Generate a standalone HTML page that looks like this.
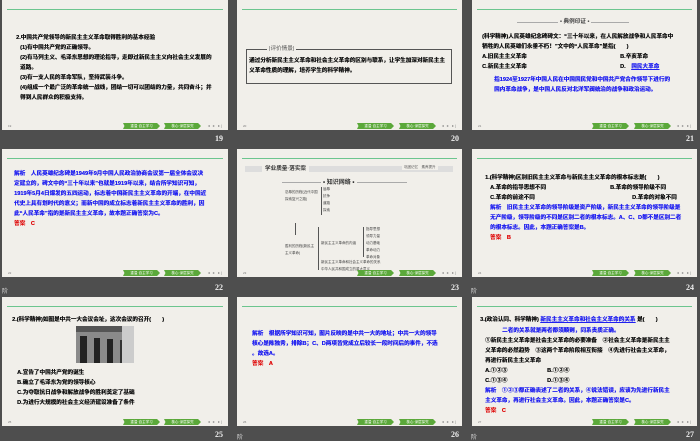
<!DOCTYPE html>
<html><head><meta charset="utf-8">
<style>
*{margin:0;padding:0;box-sizing:border-box}
body{width:700px;height:438px;background:#4e4e4e;position:relative;overflow:hidden;font-family:"Liberation Sans","Noto Sans CJK SC",sans-serif}
.s{position:absolute;background:#f1efea;overflow:hidden}
.s .gl{position:absolute;left:5px;right:5px;top:9px;height:1px;background:#6cc58e}
.s .ft{position:absolute;bottom:2px;left:6px;font-size:3px;color:#777}
.b{position:absolute;bottom:1px;height:6px;background:#5ba83a;color:#fff;font-size:3.5px;line-height:6px;text-align:center;clip-path:polygon(0 0,92% 0,100% 50%,92% 100%,0 100%,4% 50%)}
.nav{position:absolute;bottom:2px;right:5px;font-size:4px;color:#888;letter-spacing:1px}
.n{position:absolute;color:#eee;font-size:8px;font-weight:bold;font-family:"Liberation Serif",serif}
.j{position:absolute;color:#ddd;font-size:6px;font-family:"Noto Sans CJK SC",sans-serif}
.t{position:absolute;font-size:5.6px;line-height:10px;font-weight:bold;color:#111;white-space:nowrap;text-shadow:0.25px 0 0 currentColor}
.bl{color:#2020f0}.rd{color:#e01010}.ul{text-decoration:underline}
</style></head><body>

<!-- row 1 -->
<div class="s" style="left:2px;top:0;width:226px;height:130px">
<div class="gl"></div>
<div class="t" style="left:14px;top:33px">2.中国共产党领导的新民主主义革命取得胜利的基本经验</div>
<div class="t" style="left:18px;top:43px">(1)有中国共产党的正确领导。</div>
<div class="t" style="left:18px;top:53px">(2)有马列主义、毛泽东思想的理论指导，走即过新民主主义向社会主义发展的</div>
<div class="t" style="left:18px;top:63px">道路。</div>
<div class="t" style="left:18px;top:73px">(3)有一支人民的革命军队，坚持武装斗争。</div>
<div class="t" style="left:18px;top:83px">(4)组成一个最广泛的革命统一战线，团结一切可以团结的力量，共同奋斗；并</div>
<div class="t" style="left:18px;top:93px">得到人民群众的积极支持。</div>
<div class="ft">19</div><div class="b" style="left:121px;width:37px">重温·自主学习</div><div class="b" style="left:162px;width:37px">核心·深层探究</div><div class="nav">◂ ▸ ▸|</div>
</div>
<div class="n" style="left:215px;top:134px">19</div>

<div class="s" style="left:237px;top:0;width:225px;height:130px">
<div class="gl"></div>
<div style="position:absolute;left:9px;top:49px;width:206px;height:35px;border:1px solid #555"></div>
<div style="position:absolute;left:30px;top:44px;background:#f1efea;font-size:5.6px;color:#555;padding:0 2px">|评价情景|</div>
<div class="t" style="left:12px;top:56px">通过分析新民主主义革命和社会主义革命的区别与联系，让学生加深对新民主主</div>
<div class="t" style="left:12px;top:66px">义革命性质的理解，培养学生的科学精神。</div>
<div class="ft">20</div><div class="b" style="left:120px;width:37px">重温·自主学习</div><div class="b" style="left:162px;width:37px">核心·深层探究</div><div class="nav">◂ ▸ ▸|</div>
</div>
<div class="n" style="left:451px;top:134px">20</div>

<div class="s" style="left:472px;top:0;width:225px;height:130px">
<div class="gl"></div>
<div style="position:absolute;left:45px;top:22px;width:112px;height:1px;background:#aaa"></div>
<div style="position:absolute;left:86px;top:17px;background:#f1efea;font-size:5.6px;font-weight:bold;color:#444;padding:0 2px">• 典例印证 •</div>
<div class="t" style="left:10px;top:32px">(科学精神)人民英雄纪念碑碑文：“三十年以来，在人民解放战争和人民革命中</div>
<div class="t" style="left:10px;top:42px">牺牲的人民英雄们永垂不朽！”文中的“人民革命”是指(　　)</div>
<div class="t" style="left:10px;top:52px">A.旧民主主义革命</div><div class="t" style="left:148px;top:52px">B.辛亥革命</div>
<div class="t" style="left:10px;top:62px">C.新民主主义革命</div><div class="t" style="left:148px;top:62px">D.　<span class="bl ul">国民大革命</span></div>
<div class="t bl" style="left:22px;top:75px">指1924至1927年中国人民在中国国民党和中国共产党合作领导下进行的</div>
<div class="t bl" style="left:22px;top:85px">国内革命战争，是中国人民反对北洋军阀统治的战争和政治运动。</div>
<div class="ft">21</div><div class="b" style="left:120px;width:37px">重温·自主学习</div><div class="b" style="left:162px;width:37px">核心·深层探究</div><div class="nav">◂ ▸ ▸|</div>
</div>
<div class="n" style="left:686px;top:134px">21</div>

<!-- row 2 -->
<div class="s" style="left:2px;top:149px;width:226px;height:128px">
<div class="gl"></div>
<div class="t bl" style="left:12px;top:20px">解析　人民英雄纪念碑是1949年9月中国人民政治协商会议第一届全体会议决</div>
<div class="t bl" style="left:12px;top:30px">定建立的，碑文中的“三十年以来”也就是1919年以来，结合所学知识可知，</div>
<div class="t bl" style="left:12px;top:40px">1919年5月4日爆发的五四运动，标志着中国新民主主义革命的开端，在中国近</div>
<div class="t bl" style="left:12px;top:50px">代史上具有划时代的意义；而新中国的成立标志着新民主主义革命的胜利，因</div>
<div class="t bl" style="left:12px;top:60px">此“人民革命”指的是新民主主义革命，故本题正确答案为C。</div>
<div class="t rd" style="left:12px;top:70px">答案　C</div>
<div class="ft">22</div><div class="b" style="left:121px;width:37px">重温·自主学习</div><div class="b" style="left:162px;width:37px">核心·深层探究</div><div class="nav">◂ ▸ ▸|</div>
</div>
<div class="j" style="left:2px;top:286px">阶</div>
<div class="n" style="left:215px;top:283px">22</div>

<div class="s" style="left:237px;top:149px;width:225px;height:128px">
<div class="gl"></div>
<div style="position:absolute;left:8px;top:17px;width:208px;height:6px;background:#ddd"></div>
<div style="position:absolute;left:25px;top:15px;background:#f1efea;font-size:5.6px;font-weight:bold;color:#333;padding:0 3px">学业质量·落实案</div>
<div style="position:absolute;left:165px;top:16px;background:#f1efea;font-size:3.5px;color:#555;padding:0 2px">巩固记忆　素养提升</div>
<div style="position:absolute;left:45px;top:33px;width:125px;height:1px;background:#aaa"></div>
<div style="position:absolute;left:84px;top:28px;background:#f1efea;font-size:6px;font-weight:bold;color:#333;padding:0 2px">• 知识网络 •</div>
<div style="position:absolute;font-size:3.5px;color:#444;line-height:7px;left:48px;top:40px">忍辱的历程(近代中国<br>探索复兴之路)</div>
<div style="position:absolute;left:84px;top:38px;width:1px;height:28px;background:#555"></div>
<div style="position:absolute;font-size:3.5px;color:#444;line-height:7px;left:86px;top:37px">屈辱<br>抗争<br>道路<br>探索</div>
<div style="position:absolute;left:58px;top:74px;width:1px;height:12px;background:#555"></div>
<div style="position:absolute;font-size:3.5px;color:#444;line-height:7px;left:48px;top:94px">胜利的历程(新民主<br>主义革命)</div>
<div style="position:absolute;left:81px;top:78px;width:1px;height:43px;background:#555"></div>
<div style="position:absolute;font-size:3.5px;color:#444;left:84px;top:92px">新民主主义革命的内涵</div>
<div style="position:absolute;left:126px;top:78px;width:1px;height:30px;background:#555"></div>
<div style="position:absolute;font-size:3.5px;color:#444;line-height:7px;left:129px;top:77px">指导思想<br>领导力量<br>动力基础<br>革命动力<br>革命对象</div>
<div style="position:absolute;font-size:3.5px;color:#444;line-height:7px;left:84px;top:110px">新民主主义革命和社会主义革命的关系<br>中华人民共和国成立的重大意义</div>
<div class="ft">23</div><div class="b" style="left:120px;width:37px">重温·自主学习</div><div class="b" style="left:162px;width:37px">核心·深层探究</div><div class="nav">◂ ▸ ▸|</div>
</div>
<div class="n" style="left:451px;top:283px">23</div>

<div class="s" style="left:472px;top:149px;width:225px;height:128px">
<div class="gl"></div>
<div class="t" style="left:13px;top:24px">1.(科学精神)区别旧民主主义革命与新民主主义革命的根本标志是(　　)</div>
<div class="t" style="left:18px;top:34px">A.革命的指导思想不同</div><div class="t" style="left:138px;top:34px">B.革命的领导阶级不同</div>
<div class="t" style="left:18px;top:44px">C.革命的前途不同</div><div class="t" style="left:160px;top:44px">D.革命的对象不同</div>
<div class="t bl" style="left:18px;top:54px">解析　旧民主主义革命的领导阶级是资产阶级，新民主主义革命的领导阶级是</div>
<div class="t bl" style="left:18px;top:64px">无产阶级，领导阶级的不同是区别二者的根本标志。A、C、D都不是区别二者</div>
<div class="t bl" style="left:18px;top:74px">的根本标志。因此，本题正确答案是B。</div>
<div class="t rd" style="left:18px;top:84px">答案　B</div>
<div class="ft">24</div><div class="b" style="left:120px;width:37px">重温·自主学习</div><div class="b" style="left:162px;width:37px">核心·深层探究</div><div class="nav">◂ ▸ ▸|</div>
</div>
<div class="j" style="left:471px;top:286px">阶</div>
<div class="n" style="left:686px;top:283px">24</div>

<!-- row 3 -->
<div class="s" style="left:2px;top:297px;width:226px;height:129px">
<div class="gl"></div>
<div class="t" style="left:10px;top:18px">2.(科学精神)如图是中共一大会议会址，这次会议的召开(　　)</div>
<div style="position:absolute;left:74px;top:29px;width:58px;height:37px;background:#8a8a8a;overflow:hidden">
<div style="position:absolute;left:0;top:0;width:58px;height:6px;background:#555"></div>
<div style="position:absolute;left:4px;top:10px;width:7px;height:27px;background:#222"></div>
<div style="position:absolute;left:18px;top:12px;width:6px;height:25px;background:#222"></div>
<div style="position:absolute;left:31px;top:13px;width:6px;height:24px;background:#222"></div>
<div style="position:absolute;left:44px;top:14px;width:5px;height:23px;background:#333"></div>
<div style="position:absolute;right:0;top:0;width:12px;height:37px;background:#ccc"></div>
</div>
<div class="t" style="left:15px;top:71px">A.宣告了中国共产党的诞生</div>
<div class="t" style="left:15px;top:81px">B.确立了毛泽东为党的领导核心</div>
<div class="t" style="left:15px;top:91px">C.为夺取抗日战争和解放战争的胜利奠定了基础</div>
<div class="t" style="left:15px;top:101px">D.为进行大规模的社会主义经济建设准备了条件</div>
<div class="ft">25</div><div class="b" style="left:121px;width:37px">重温·自主学习</div><div class="b" style="left:162px;width:37px">核心·深层探究</div><div class="nav">◂ ▸ ▸|</div>
</div>
<div class="n" style="left:215px;top:430px">25</div>

<div class="s" style="left:237px;top:297px;width:225px;height:129px">
<div class="gl"></div>
<div class="t bl" style="left:15px;top:32px">解析　根据所学知识可知，图片反映的是中共一大的地址；中共一大的领导</div>
<div class="t bl" style="left:15px;top:42px">核心是陈独秀，排除B；C、D两项皆党成立后较长一段时间后的事件，不选</div>
<div class="t bl" style="left:15px;top:52px">。故选A。</div>
<div class="t rd" style="left:15px;top:62px">答案　A</div>
<div class="ft">26</div><div class="b" style="left:120px;width:37px">重温·自主学习</div><div class="b" style="left:162px;width:37px">核心·深层探究</div><div class="nav">◂ ▸ ▸|</div>
</div>
<div class="j" style="left:237px;top:432px">阶</div>
<div class="n" style="left:451px;top:430px">26</div>

<div class="s" style="left:472px;top:297px;width:225px;height:129px">
<div class="gl"></div>
<div class="t" style="left:8px;top:18px">3.(政治认同、科学精神) <span class="bl ul">新民主主义革命和社会主义革命的关系</span> 是(　　)</div>
<div class="t bl" style="left:30px;top:29px">二者的关系就是两者都须顺则，同系贵质正确。</div>
<div class="t" style="left:13px;top:39px">①新民主主义革命是社会主义革命的必要准备　②社会主义革命是新民主主</div>
<div class="t" style="left:13px;top:49px">义革命的必然趋势　③这两个革命阶段相互衔接　④先进行社会主义革命，</div>
<div class="t" style="left:13px;top:59px">再进行新民主主义革命</div>
<div class="t" style="left:13px;top:69px">A.①②③</div><div class="t" style="left:75px;top:69px">B.①②④</div>
<div class="t" style="left:13px;top:79px">C.①③④</div><div class="t" style="left:75px;top:79px">D.①③④</div>
<div class="t bl" style="left:13px;top:89px">解析　①②③都正确表述了二者的关系，④说法错误，应该为先进行新民主</div>
<div class="t bl" style="left:13px;top:99px">主义革命，再进行社会主义革命。因此，本题正确答案是C。</div>
<div class="t rd" style="left:13px;top:109px">答案　C</div>
<div class="ft">27</div><div class="b" style="left:120px;width:37px">重温·自主学习</div><div class="b" style="left:162px;width:37px">核心·深层探究</div><div class="nav">◂ ▸ ▸|</div>
</div>
<div class="j" style="left:471px;top:432px">阶</div>
<div class="n" style="left:686px;top:430px">27</div>

</body></html>
